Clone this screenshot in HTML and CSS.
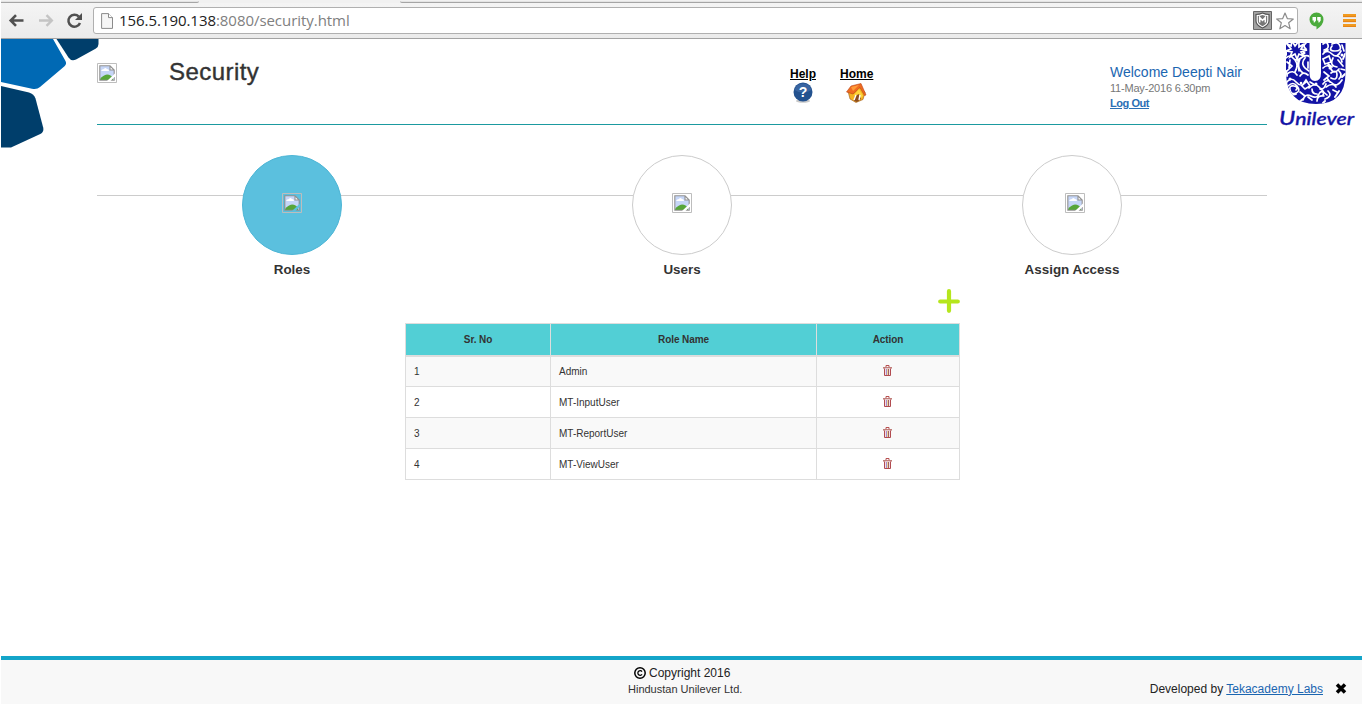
FILE: index.html
```html
<!DOCTYPE html>
<html lang="en">
<head>
<meta charset="utf-8">
<title>Security</title>
<link rel="stylesheet" href="styles.css">
</head>
<body>
<svg class="defs" width="0" height="0" aria-hidden="true">
  <symbol id="broken" viewBox="0 0 20 20">
    <path d="M.5.5h19v19H.5z" fill="none" stroke="#bdbdbd"/>
    <path d="M3 3h10l4 4v10H3z" fill="#c6d6f7"/>
    <path d="M4 8q1-2 3-2 1-2 3 0 2 0 2 2z" fill="#fff"/>
    <path d="M3 17v-1q3-4 7-4.500 4 0 6 3.500v2z" fill="#57a639"/>
    <path d="M13 3v4h4z" fill="#fff"/>
    <path d="M17.2 17.200V7L13 2.800H2.800v14.400zM13 3v4h4" fill="none" stroke="#919191" stroke-width="1.1"/>
    <path class="tear" d="M10 18 18 10.500v3L13.500 18z"/>
  </symbol>
  <symbol id="trash" viewBox="0 0 9 11">
    <path d="M3 2V.5h3V2" fill="none" stroke="#b75050"/>
    <path d="M0 2h9v1.600H0z" fill="#c17f7b"/>
    <path d="M1.500 3.500v7h6v-7" fill="#f1dde4" stroke="#b14b50"/>
    <path d="M3.500 4v6" stroke="#a98bd0"/>
    <path d="M5.500 4v6" stroke="#a5605d"/>
    <path d="M4.500 4v6" stroke="#eadb9d"/>
  </symbol>
</svg>

<div class="browser">
  <div class="tabs"><i class="tab-a"></i><i class="tab-b"></i></div>
  <div class="toolbar">
    <svg class="nav" width="74" height="18" viewBox="0 0 74 18" fill="none">
      <path d="M15.500 8.500H3M8 3.200 2.700 8.500 8 13.800" stroke="#505050" stroke-width="2.600"/>
      <path d="M31 8.500h12.500M38.500 3.200 43.800 8.500l-5.300 5.300" stroke="#c4c4c4" stroke-width="2.400"/>
      <path d="M72 11A6 6 0 1 1 70.800 4.600" stroke="#505050" stroke-width="2.500"/>
      <path d="M74 1v7h-7z" fill="#505050"/>
    </svg>
    <div class="address">
      <svg width="12" height="16" viewBox="0 0 12 16"><path d="M.6.6h6.900l4 4v10.800H.6z" fill="#f6f6f6" stroke="#8b8b8b"/><path d="M7.500.6v4h4" fill="#fff" stroke="#8b8b8b"/></svg>
      <span class="url">156.5.190.138<span>:8080/security.html</span></span>
      <svg class="shield" width="19" height="19" viewBox="0 0 19 19"><path d="M.5.500h18v18H.5z" fill="#a2a2a2" stroke="#666"/><path d="M3 3.500q3.500 0 6.500-1.500 3 1.500 6.500 1.500V10q0 4-6.500 7Q3 14 3 10z" fill="#fff" stroke="#555" stroke-width="1.200"/><path d="M4.800 5q2.700 0 4.700-1 2 1 4.700 1v5q0 3-4.700 5.200Q4.800 13 4.800 10z" fill="#777"/><path d="M6.700 11.500V6.500l2.800 3 2.800-3v5" fill="none" stroke="#fff" stroke-width="1.500"/></svg>
      <svg width="18" height="18" viewBox="0 0 18 18"><path d="m9 1 2.300 5.600 6 .4-4.600 3.800 1.500 6L9 13.500l-5.200 3.300 1.500-6L.7 7l6-.4z" fill="#fff" stroke="#8c8c8c" stroke-width="1.200" stroke-linejoin="round"/></svg>
    </div>
    <svg class="hangouts" width="15" height="18" viewBox="0 0 15 18"><path d="M7.500.500a7 7 0 0 1 7 7q0 5.500-7 10v-3a7 7 0 0 1 0-14z" fill="#4bab3c"/><path d="M3.500 5H7v3.500L5.500 10.500H4.700V8.500H3.500zM8.200 5h3.500v3.500l-1.500 2h-.8v-2H8.200z" fill="#fff"/></svg>
    <svg width="13" height="13" viewBox="0 0 13 13"><path d="M0 1.500h13M0 6.500h13M0 11.500h13" stroke="#f19a1f" stroke-width="3"/><path d="M0 2.700h13M0 7.700h13M0 12.700h13" stroke="#dc7412" stroke-width=".7"/></svg>
  </div>
</div>

<div class="page">
  <svg class="hexes" width="98" height="110" viewBox="0 0 98 110">
    <path d="M0 0h52l12.500 22q1.500 3-1 5.200L39 48q-3 2.700-8 1.700L0 43z" fill="#0069b4"/>
    <path d="M55.500 0h42v5q0 3-3 4.700L75 20.500q-4.500 2.300-7.500-2z" fill="#003e6b"/>
    <path d="M0 47l28 6.500q5 1.500 6.500 6L42.300 89q.7 4-3 6L10 108.500H0z" fill="#003e6b"/>
  </svg>

  <svg class="unilever" width="78" height="90" viewBox="0 0 78 90" role="img" aria-label="Unilever">
    <defs><clipPath id="u"><path d="M8 3h23.500v30q0 8 5.500 8 6 0 6-8V3h24.500v30q0 31-29.500 31T8 33z"/></clipPath></defs>
    <g clip-path="url(#u)">
      <path d="M6 0h64v66H6z" fill="#1313a5"/>
      <g fill="none" stroke="#fff" stroke-width="1.700" stroke-linecap="round">
        <path d="m8 3 5 3 1-5 3 5 4-5 0 6 5-3-3 5 6 1-6 2 3 4-5-2-2 5-2-5-5 3 2-5-6-1 5-2z"/>
        <path d="M28 3q-4 3 0 6M8 18q4-4 7 0t8 0 9-1M9 22l5 4-5 5M17 20q4 5 0 12M22 19q-4 9 3 14M27 18q-6 7 4 13M9 34q6-5 10 1M30 35q-5-4-8 1M12 20l-1 8M20 21l1 10M30 22v6"/>
        <path d="M8 43q5-7 10-1t10 0M10 46q5-5 9 0t-1 7-6-3 4-4 2 4M24 46l4-6 4 6-5 3zM22 52l5 4M31 48q6-6 10-1t7-3M25 60q2-7 8-4t8-2 8 1M34 49q0 5 5 5M39 61q0-6 7-5M30 57l4 3M32 42l5 3"/>
        <path d="M45 4q4-3 5 1t-4 5M54 4q6-3 8 2t-5 5-3-5M45 14q4-5 9 0t9-3M50 10l-4 2M45 19l6-3 2 6-6 2zM58 16q5 0 6 6M55 18q-4 8 4 9M60 20l5 6M45 28q5-5 8 1t8 0M46 32l5 4-5 4M53 33q6-4 6 2t-6 3M61 31q4 4 0 8M45 44q4-6 9-1t10-3M48 47q7-5 10 0M50 51q5 5-3 8M42 49q5 2 3 6M55 50l4 2M64 5l2 6M50 24l4 3M63 29l4 1M49 38l3 4"/>
        <path d="M8 12v3M8 31l1 5M67 14l-2 5M67 34l-3 3M61 51l-4 6M13 55l5-1M21 62l4-3M45 63l2-2" stroke-width="2"/>
      </g>
      <g fill="#fff"><circle cx="12" cy="39" r="1.500"/><circle cx="26" cy="13" r="1.500"/><circle cx="52" cy="28" r="1.500"/><circle cx="38" cy="44" r="1.500"/><circle cx="23" cy="43" r="1.300"/><circle cx="64" cy="15" r="1.500"/></g>
    </g>
    <text class="wordmark" x="1" y="85" textLength="75" lengthAdjust="spacingAndGlyphs"><tspan class="cap">U</tspan>nilever</text>
  </svg>

  <main class="container">
    <header class="header">
      <svg class="icon20 logo"><use href="#broken"/></svg>
      <h1>Security</h1>
      <nav class="links">
        <a>Help
          <svg width="20" height="21" viewBox="0 0 20 21"><ellipse cx="10" cy="19" rx="7" ry="1.800" fill="#c9c9c9"/><circle cx="10" cy="10" r="9.500" fill="#23528f"/><path d="M1.500 8a8.800 8.800 0 0 1 17 0q-9 5-17 0z" fill="#3965a1"/><text class="qmark" x="10" y="15">?</text></svg>
        </a>
        <a>Home
          <svg class="house" width="21" height="20" viewBox="0 0 21 20"><path d="m2 8 2 8 6 3.500 7-3 2-7-5-6z" fill="#f4b221" stroke="#9e571b" stroke-width=".6"/><path d="M.500 9 5 3 15 .500 20 12l-1.500.5L14 4.500 7 11z" fill="#ef6b20" stroke="#b9431a" stroke-width=".6"/><path d="m5 4 8-2-6 6z" fill="#ff9b38"/><path d="m13 6 4 7-4 4-5-5z" fill="#ffd53b"/><path d="m8 18 1-5 4-2 2 5-4 3z" fill="#8a4c20"/><path d="m8 17 2-5M13 17l1-5" stroke="#fff" stroke-width="1.400"/></svg>
        </a>
      </nav>
      <div class="user">
        <div class="welcome">Welcome Deepti Nair</div>
        <div class="date">11-May-2016 6.30pm</div>
        <a class="logout">Log Out</a>
      </div>
    </header>

    <div class="steps">
      <div class="step active"><div class="circle"><svg class="icon20"><use href="#broken"/></svg></div><span>Roles</span></div>
      <div class="step"><div class="circle"><svg class="icon20"><use href="#broken"/></svg></div><span>Users</span></div>
      <div class="step access"><div class="circle"><svg class="icon20"><use href="#broken"/></svg></div><span>Assign Access</span></div>
    </div>

    <section class="roles">
      <svg class="add" width="22" height="24" viewBox="0 0 22 24"><path d="M11 2.200v19.600M2.200 12.500h17.600" stroke="#b5e61d" stroke-width="4.200" stroke-linecap="round"/></svg>
      <table>
        <colgroup><col class="c1"><col class="c2"><col class="c3"></colgroup>
        <thead><tr><th>Sr. No</th><th>Role Name</th><th>Action</th></tr></thead>
        <tbody>
          <tr><td>1</td><td>Admin</td><td><svg class="trash"><use href="#trash"/></svg></td></tr>
          <tr><td>2</td><td>MT-InputUser</td><td><svg class="trash"><use href="#trash"/></svg></td></tr>
          <tr><td>3</td><td>MT-ReportUser</td><td><svg class="trash"><use href="#trash"/></svg></td></tr>
          <tr><td>4</td><td>MT-ViewUser</td><td><svg class="trash"><use href="#trash"/></svg></td></tr>
        </tbody>
      </table>
    </section>
  </main>

  <footer class="footer">
    <div class="copy">
      <div class="line1"><svg width="12" height="12" viewBox="0 0 12 12" fill="none" stroke="#000"><circle cx="6" cy="6" r="5.200" stroke-width="1.500"/><path d="M8 4.600a2.300 2.300 0 1 0 0 2.800" stroke-width="1.300"/></svg><span>Copyright 2016</span></div>
      <div class="line2">Hindustan Unilever Ltd.</div>
    </div>
    <div class="dev">
      <span class="by">Developed by <a>Tekacademy Labs</a></span>
      <svg width="12" height="11" viewBox="0 0 12 11"><path d="m2 1.500 8 8M10 1.500l-8 8" stroke="#000" stroke-width="3.500"/></svg>
    </div>
  </footer>
</div>
</body>
</html>
```

FILE: styles.css
```css
* { box-sizing: border-box; }
body {
  margin: 0;
  width: 1363px;
  height: 705px;
  overflow: hidden;
  background: #fff;
  color: #333;
  font-family: "Liberation Sans", Arial, sans-serif;
}
svg { display: block; flex: none; }
.defs { position: absolute; }
.tear { fill: var(--tear, #fff); }

/* Browser chrome */
.browser {
  height: 39px;
  margin: 0 1px;
  background: linear-gradient(#f5f5f5, #ebebeb);
  border-bottom: 1px solid #a3a3a3;
}
.tabs {
  height: 3px;
  display: flex;
  justify-content: space-between;
  align-items: flex-start;
  padding-top: 1px;
  background: #f1f1f1;
}
.tabs i { height: 2px; border-bottom: 1px solid #a5a5a5; background: #e4e4e4; }
.tab-a { width: 198px; border-radius: 0 0 3px 0; }
.tab-b { width: 962px; border-radius: 0 0 0 3px; }
.toolbar {
  height: 35px;
  display: flex;
  align-items: center;
  padding: 0 5px 0 7px;
}
.nav { margin-right: 11px; }
.address {
  width: 1205px;
  height: 27px;
  display: flex;
  align-items: center;
  padding: 0 3px 0 7px;
  background: #fff;
  border: 1px solid #b0b0b0;
  border-radius: 3px;
}
.url {
  flex: 1;
  margin-left: 6px;
  padding-bottom: 1px;
  font: 15px/24px "Open Sans", "Noto Sans", sans-serif;
  letter-spacing: -.05px;
  color: #222;
  white-space: nowrap;
}
.url span { color: #808080; }
.shield { margin-right: 4px; }
.hangouts { margin: 0 19px 0 11px; }

/* Page shell */
.page {
  position: relative;
  height: 665px;
  margin: 0 1px;
  display: flex;
  flex-direction: column;
}
.hexes { position: absolute; left: 0; top: 0; }
.unilever { position: absolute; left: 1277px; top: 1px; }
.wordmark {
  font: italic 500 18px Lato, sans-serif;
  fill: #1313a5;
  stroke: #1313a5;
  stroke-width: .35px;
}
.cap { font-size: 20px; }
.container {
  width: 1170px;
  flex: 1;
  margin-left: 96px;
}
.icon20 { width: 20px; height: 20px; }

/* Header */
.header {
  height: 86px;
  display: flex;
  align-items: flex-start;
  border-bottom: 1px solid #1b9aa0;
}
.logo { margin: 24px 52px 0 0; }
h1 {
  width: 621px;
  margin: 19px 0 0;
  font-size: 24px;
  line-height: 28px;
  font-weight: 400;
  letter-spacing: .45px;
  -webkit-text-stroke: .4px #333;
}
.links {
  width: 320px;
  display: flex;
  gap: 24px;
  padding-top: 28px;
}
.links a {
  display: flex;
  flex-direction: column;
  align-items: center;
  font-size: 12px;
  line-height: 15px;
  font-weight: bold;
  color: #000;
  text-decoration: underline;
}
.house { margin-top: 1px; }
.qmark {
  font: bold 14px "Liberation Sans", sans-serif;
  fill: #fff;
  text-anchor: middle;
}
.user { padding-top: 25px; white-space: nowrap; }
.welcome { font-size: 14px; line-height: 17px; color: #1b66b1; }
.date { font-size: 11px; line-height: 15px; letter-spacing: -.2px; color: #777; }
.logout {
  display: block;
  font-size: 11px;
  line-height: 15px;
  font-weight: bold;
  letter-spacing: -.45px;
  color: #2a6fb5;
  text-decoration: underline;
}

/* Wizard steps */
.steps {
  display: grid;
  grid-template-columns: repeat(3, 390px);
  padding-top: 30px;
  background: linear-gradient(#ccc, #ccc) 0 70px / 100% 1px no-repeat;
}
.step {
  display: flex;
  flex-direction: column;
  align-items: center;
  font-size: 13.400px;
  line-height: 18px;
  font-weight: bold;
}
.circle {
  width: 100px;
  height: 100px;
  display: flex;
  justify-content: center;
  align-items: center;
  margin-bottom: 6px;
  padding-bottom: 4px;
  background: #fff;
  border: 1px solid #ccc;
  border-radius: 50%;
}
.active .circle { background: #5bc0de; border-color: #4eb6d6; }
.active .icon20 { --tear: #5bc0de; }
.access .circle { padding-left: 6px; }

/* Roles table */
.roles {
  width: 555px;
  margin: 10px 0 0 308px;
}
.add { margin: 0 0 10px auto; }
table {
  width: 555px;
  table-layout: fixed;
  border-collapse: collapse;
  font-size: 10px;
  line-height: 14px;
}
.c1 { width: 145px; }
.c2 { width: 266px; }
.c3 { width: 143px; }
th, td { height: 31px; padding: 0 8px; border: 1px solid #ddd; text-align: left; }
th {
  height: 32px;
  padding-top: 2px;
  background: #52cfd5;
  text-align: center;
  border-bottom-width: 2px;
  letter-spacing: -.1px;
}
tbody tr:nth-child(odd) { background: #f9f9f9; }
td { padding-top: 2px; }
.trash { width: 9px; height: 11px; margin: -3px 0 0 58px; }

/* Footer */
.footer {
  height: 48px;
  background: #f8f8f8;
  border-top: 4px solid #14a5c9;
  display: grid;
  grid-template-columns: 1fr auto;
}
.copy {
  grid-column: 1 / -1;
  grid-row: 1;
  width: 114px;
  margin-left: 627px;
  padding-top: 5px;
  white-space: nowrap;
}
.line1 {
  display: flex;
  align-items: center;
  gap: 3px;
  padding-left: 6px;
  font-size: 12px;
  line-height: 16px;
  color: #222;
}
.line1 svg { margin-top: -1px; }
.line2 { font-size: 11px; line-height: 16px; }
.dev {
  grid-column: 2;
  grid-row: 1;
  display: flex;
  align-items: center;
  gap: 12px;
  padding: 13px 15px 0 0;
  font-size: 12px;
  color: #222;
}
.dev svg { margin-top: -1px; }
.dev a { color: #1b66b1; text-decoration: underline; }
```
